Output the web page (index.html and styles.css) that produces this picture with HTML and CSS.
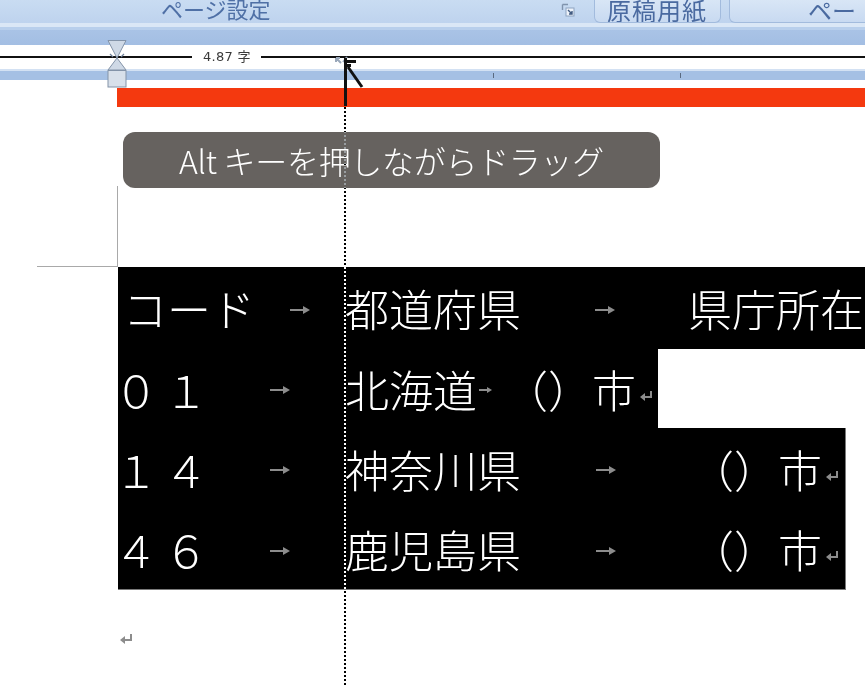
FILE: index.html
```html
<!DOCTYPE html>
<html lang="ja">
<head>
<meta charset="utf-8">
<title>Alt キーを押しながらドラッグ</title>
<link rel="stylesheet" href="styles.css">
</head>
<body>
<div class="screen">
  <div class="ribbon">
    <span class="group-label">ページ設定</span>
    <span class="launcher">
      <svg width="15" height="15" viewBox="0 0 15 15"><path d="M1.5 1.5 H7 M1.5 1.5 V7" stroke="#7f93ad" stroke-width="1.4" fill="none"/><rect x="5" y="5" width="8" height="8" fill="#eef3fa" stroke="#8ea3bf"/><path d="M7 7 L11 11 M11 8 V11 H8" stroke="#405a80" stroke-width="1.4" fill="none"/></svg>
    </span>
    <span class="rbtn btn-genko">原稿用紙</span>
    <span class="rbtn btn-page">ページ</span>
  </div>

  <div class="ruler">
    <div class="band b-light"></div>
    <div class="band b-mid"></div>
    <div class="band b-blue"></div>
    <div class="b-white">
      <span class="rline seg1"></span>
      <span class="rlabel">4.87 字</span>
      <span class="rline seg2"></span>
    </div>
    <div class="band b-light2"></div>
    <div class="band b-blue2"><span class="tick t1"></span><span class="tick t2"></span></div>
    <div class="band b-gap"></div>

    <svg class="indent-marker" width="20" height="48" viewBox="0 0 20 48">
      <polygon points="1,0.5 19,0.5 10,18" fill="#cfd9e6" stroke="#8393a8"/>
      <polygon points="10,18 1,30 19,30" fill="#cfd9e6" stroke="#8393a8"/>
      <path d="M3 14 L6 17 M17 14 L14 17" stroke="#6d7f98" stroke-width="1.2"/>
      <rect x="1" y="30.5" width="18" height="16.5" fill="#d8e0ea" stroke="#8393a8"/>
    </svg>

    <svg class="cursor" width="34" height="52" viewBox="0 0 34 52">
      <path d="M3 4 L8 9 M3 4 V8 M3 4 H7" stroke="#9aa8ba" stroke-width="2" fill="none"/>
      <path d="M14 3 L10 8" stroke="#9aa8ba" stroke-width="2"/>
      <rect x="11" y="4" width="3" height="48" fill="#111"/>
      <rect x="14" y="6" width="9" height="3" fill="#111"/>
      <rect x="14" y="10" width="4" height="3" fill="#111"/>
      <path d="M15 13 L29 33" stroke="#111" stroke-width="3"/>
    </svg>
  </div>

  <div class="redbar"></div>

  <div class="callout">Alt キーを押しながらドラッグ</div>

  <div class="corner"></div>

  <div class="table">
    <div class="row r1">
      <div class="c1"><span class="t kana">コード</span><span class="tab"><svg class="arr" width="20" height="10" viewBox="0 0 20 10"><path d="M0 5 H14" stroke="#8c8c8c" stroke-width="2"/><polygon points="13,1 20,5 13,9" fill="#8c8c8c"/></svg></span></div>
      <div class="c2"><span class="t">都道府県</span><span class="tab"><svg class="arr" width="20" height="10" viewBox="0 0 20 10"><path d="M0 5 H14" stroke="#8c8c8c" stroke-width="2"/><polygon points="13,1 20,5 13,9" fill="#8c8c8c"/></svg></span></div>
      <span class="t">県庁所在</span>
    </div>
    <div class="row r2">
      <div class="c1"><span class="t num">０１</span><span class="tab"><svg class="arr" width="20" height="10" viewBox="0 0 20 10"><path d="M0 5 H14" stroke="#8c8c8c" stroke-width="2"/><polygon points="13,1 20,5 13,9" fill="#8c8c8c"/></svg></span></div>
      <span class="t">北海道</span>
      <span class="tab small"><svg width="13" height="10" viewBox="0 0 13 10"><path d="M0 5 H9" stroke="#8c8c8c" stroke-width="2"/><polygon points="8,2 13,5 8,8" fill="#8c8c8c"/></svg></span>
      <span class="t">（）市</span>
      <svg class="ret" width="13" height="12" viewBox="0 0 13 12"><path d="M11 1 V7 H4" stroke="#8c8c8c" stroke-width="2" fill="none"/><polygon points="0,7 5,3 5,11" fill="#8c8c8c"/></svg>
    </div>
    <div class="row r3">
      <div class="c1"><span class="t num">１４</span><span class="tab"><svg class="arr" width="20" height="10" viewBox="0 0 20 10"><path d="M0 5 H14" stroke="#8c8c8c" stroke-width="2"/><polygon points="13,1 20,5 13,9" fill="#8c8c8c"/></svg></span></div>
      <div class="c2 wide"><span class="t">神奈川県</span><span class="tab"><svg class="arr" width="20" height="10" viewBox="0 0 20 10"><path d="M0 5 H14" stroke="#8c8c8c" stroke-width="2"/><polygon points="13,1 20,5 13,9" fill="#8c8c8c"/></svg></span></div>
      <span class="t">（）市</span>
      <svg class="ret" width="13" height="12" viewBox="0 0 13 12"><path d="M11 1 V7 H4" stroke="#8c8c8c" stroke-width="2" fill="none"/><polygon points="0,7 5,3 5,11" fill="#8c8c8c"/></svg>
    </div>
    <div class="row r4">
      <div class="c1"><span class="t num">４６</span><span class="tab"><svg class="arr" width="20" height="10" viewBox="0 0 20 10"><path d="M0 5 H14" stroke="#8c8c8c" stroke-width="2"/><polygon points="13,1 20,5 13,9" fill="#8c8c8c"/></svg></span></div>
      <div class="c2 wide"><span class="t">鹿児島県</span><span class="tab"><svg class="arr" width="20" height="10" viewBox="0 0 20 10"><path d="M0 5 H14" stroke="#8c8c8c" stroke-width="2"/><polygon points="13,1 20,5 13,9" fill="#8c8c8c"/></svg></span></div>
      <span class="t">（）市</span>
      <svg class="ret" width="13" height="12" viewBox="0 0 13 12"><path d="M11 1 V7 H4" stroke="#8c8c8c" stroke-width="2" fill="none"/><polygon points="0,7 5,3 5,11" fill="#8c8c8c"/></svg>
    </div>
  </div>

  <div class="endmark"><svg width="13" height="12" viewBox="0 0 13 12"><path d="M11 1 V7 H4" stroke="#8c8c8c" stroke-width="2" fill="none"/><polygon points="0,7 5,3 5,11" fill="#8c8c8c"/></svg></div>

  <div class="guide"></div>
</div>
</body>
</html>
```

FILE: styles.css
```css
html, body {
  margin: 0;
  padding: 0;
  background: #ffffff;
}

.screen {
  position: relative;
  width: 865px;
  height: 686px;
  overflow: hidden;
  background: #ffffff;
  font-family: "Noto Sans CJK JP", "Noto Sans", sans-serif;
}

/* ---------- ribbon ---------- */
.ribbon {
  display: flex;
  align-items: flex-start;
  height: 23px;
  overflow: hidden;
  background: linear-gradient(#c9dcf2, #bed3ee);
}

.group-label {
  margin-left: 161px;
  width: 400px;
  margin-top: -5px;
  font-size: 22px;
  line-height: 26px;
  color: #4f70a6;
}

.launcher {
  display: flex;
  margin-top: 3px;
  width: 15px;
  height: 15px;
}

.rbtn {
  box-sizing: border-box;
  height: 24px;
  border: 1px solid #a2bbdd;
  border-top: none;
  border-radius: 0 0 6px 6px;
  background: linear-gradient(#d9e6f6, #c8daf1);
  color: #4a6aa0;
  font-size: 24px;
  overflow: hidden;
}

.btn-genko {
  margin-left: 18px;
  width: 127px;
  padding-left: 12px;
  margin-top: -1px;
  line-height: 22px;
  letter-spacing: 1px;
}

.btn-page {
  margin-left: 8px;
  flex: 1;
  margin-right: -10px;
  padding-left: 78px;
  margin-top: -1px;
  line-height: 22px;
}

/* ---------- ruler ---------- */
.ruler {
  position: relative;
  height: 65px;
}

.band { height: 4px; }
.b-light { height: 4px; background: #dae7f6; }
.b-mid { height: 3px; background: #b8cfec; }
.b-blue { height: 15px; background: linear-gradient(#a9c3e6, #a3bee3); }
.b-light2 { height: 2px; background: #d3e1f3; }
.b-blue2 {
  position: relative;
  height: 9px;
  background: #a5c0e4;
}
.b-gap { height: 8px; background: #ffffff; }

.b-white {
  display: flex;
  align-items: center;
  height: 24px;
  background: #ffffff;
}

.rline {
  height: 2px;
  background: #111111;
}
.seg1 { width: 192px; }
.seg2 { flex: 1; }

.rlabel {
  padding: 0 10px 0 11px;
  font-family: "DejaVu Sans", "Liberation Sans", "Noto Sans CJK JP", sans-serif;
  font-size: 13px;
  line-height: 16px;
  color: #3a3a3a;
  letter-spacing: 0.3px;
}

.tick {
  position: absolute;
  top: 2px;
  width: 1px;
  height: 5px;
  background: #5a6a80;
}
.t1 { left: 493px; }
.t2 { left: 680px; }

.indent-marker {
  position: absolute;
  left: 107px;
  top: 17px;
}

.cursor {
  position: absolute;
  left: 333px;
  top: 31px;
  z-index: 3;
}

.redbar {
  margin-left: 117px;
  height: 19px;
  background: #f4390f;
}

/* ---------- callout ---------- */
.callout {
  display: flex;
  align-items: center;
  justify-content: center;
  margin: 25px 0 0 123px;
  width: 537px;
  height: 56px;
  border-radius: 12px;
  background: #66625f;
  color: #ffffff;
  font-size: 32px;
  line-height: 1;
  font-weight: 300;
  letter-spacing: -0.3px;
}

.corner {
  margin: -2px 0 0 37px;
  width: 80px;
  height: 80px;
  border-right: 1px solid #a9a9a9;
  border-bottom: 1px solid #a9a9a9;
}

/* ---------- table ---------- */
.table {
  margin-left: 118px;
  color: #ffffff;
  font-size: 44px;
  font-weight: 300;
  line-height: 1;
}

.row {
  display: flex;
  align-items: center;
  box-sizing: border-box;
  padding-left: 7px;
  background: #000000;
}

.r1 { width: 747px; height: 82px; }
.r2 { width: 540px; height: 79px; }
.r3 { width: 728px; height: 81px; border-right: 1px solid #7a7a7a; }
.r4 { width: 728px; height: 81px; border-right: 1px solid #7a7a7a; border-bottom: 1px solid #7a7a7a; }

.t { white-space: nowrap; }

.kana { letter-spacing: 0; margin-left: -2px; }

.num {
  margin-left: -11px;
  letter-spacing: 6px;
}

.c1 {
  display: flex;
  align-items: center;
  width: 220px;
  flex: none;
}

.c2 {
  display: flex;
  align-items: center;
  width: 343px;
  flex: none;
}
.c2.wide { width: 345px; }

.tab {
  flex: 1;
  display: flex;
  justify-content: center;
  align-items: center;
  padding-top: 3px;
}

.tab.small {
  flex: none;
  width: 27px;
  justify-content: flex-start;
  padding-left: 2px;
  box-sizing: border-box;
}

.ret {
  margin-left: 4px;
  margin-top: 14px;
}

.endmark {
  display: flex;
  margin: 43px 0 0 120px;
}

/* ---------- alignment guide ---------- */
.guide {
  position: absolute;
  left: 344px;
  top: 107px;
  width: 2px;
  height: 579px;
  background: repeating-linear-gradient(to bottom, #ffffff 0 2px, transparent 2px 4px);
  mix-blend-mode: difference;
  z-index: 2;
}
```
